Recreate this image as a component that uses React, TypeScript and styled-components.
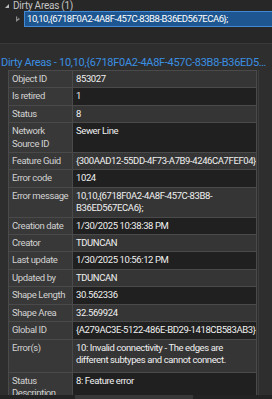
import React from "react";
import styled, { createGlobalStyle } from "styled-components";

const GlobalStyle = createGlobalStyle`
  html, body {
    margin: 0;
    padding: 0;
    background: #2b2b2b;
    overflow: hidden;
  }
  body {
    font-family: "Roboto", "Liberation Sans", sans-serif;
    font-size: 9.5px;
    letter-spacing: -0.4px;
  }
`;

const Page = styled.div`
  width: 272px;
  height: 399px;
  display: flex;
  flex-direction: column;
  overflow: hidden;
`;

const TreePanel = styled.div`
  flex: 0 0 43px;
  background: #272727;
  display: flex;
  flex-direction: column;
`;

const TreeRow = styled.div<{ $indent: number }>`
  flex: none;
  display: flex;
  align-items: center;
  padding-left: ${(p) => p.$indent}px;
  gap: 3px;
  color: #c4c4c4;
  font-size: 10px;
  letter-spacing: -0.25px;
  line-height: 11px;
  height: ${(p) => (p.$indent > 10 ? 15 : 11)}px;
  white-space: nowrap;
`;

const Arrow = styled.span`
  display: inline-block;
  width: 0;
  height: 0;
  border-left: 4px solid transparent;
  border-bottom: 4px solid #bcbcbc;
  margin-right: 1px;
`;

const HollowArrow = styled.span`
  position: relative;
  width: 4px;
  height: 6px;
  margin-right: 1px;
  &::before {
    content: "";
    position: absolute;
    left: 0;
    top: 0;
    border-top: 3px solid transparent;
    border-bottom: 3px solid transparent;
    border-left: 4px solid #8a8a8a;
  }
  &::after {
    content: "";
    position: absolute;
    left: 1px;
    top: 1.5px;
    border-top: 1.5px solid transparent;
    border-bottom: 1.5px solid transparent;
    border-left: 2px solid #272727;
  }
`;

const Selected = styled.span`
  flex: 1;
  height: 14px;
  line-height: 14px;
  background: #1d5690;
  border: 1px solid #4189d4;
  border-right: none;
  color: #ffffff;
  padding-left: 2px;
  font-size: 9.5px;
  letter-spacing: -0.45px;
`;

const DetailPanel = styled.div`
  flex: 1 1 auto;
  min-height: 0;
  background: #2e2e2e;
  border-top: 1px solid #3a3a3a;
  display: flex;
  flex-direction: column;
`;

const Title = styled.div`
  flex: 0 0 26px;
  box-sizing: border-box;
  padding: 12px 0 0 1px;
  line-height: 14px;
  font-size: 11px;
  letter-spacing: -0.3px;
  color: #3a8fe2;
  white-space: nowrap;
  overflow: hidden;
  text-overflow: ellipsis;
`;

const Body = styled.div`
  flex: 1 1 auto;
  min-height: 0;
  display: flex;
  padding-left: 8px;
  overflow: hidden;
`;

const Gutter = styled.div`
  flex: 1;
  border-left: 1px solid #3e3e3e;
  margin-left: 1px;
`;

const Table = styled.table`
  flex: none;
  width: 249px;
  border-collapse: collapse;
  table-layout: fixed;
  align-self: flex-start;
`;

const Cell = styled.td<{ $label?: boolean; $dark?: boolean }>`
  border: 1px solid #4a4a4a;
  padding: 2px 3px;
  line-height: 12.4px;
  vertical-align: top;
  white-space: pre;
  overflow: hidden;
  color: ${(p) => (p.$label ? "#d2d2d2" : "#f0f0f0")};
  background: ${(p) => (p.$label ? "#383838" : p.$dark ? "#202020" : "#353535")};
  width: ${(p) => (p.$label ? "57px" : "auto")};
`;

const Footer = styled.div`
  flex: 0 0 4px;
  display: flex;
  background: #232323;
`;

const FooterSegment = styled.div<{ $w: number; $light?: boolean }>`
  width: ${(p) => p.$w}px;
  background: ${(p) => (p.$light ? "#383838" : "transparent")};
`;

const rows: { label: string; value: string; tall?: number }[] = [
  { label: "Object ID", value: "853027" },
  { label: "Is retired", value: "1" },
  { label: "Status", value: "8" },
  { label: "Network\nSource ID", value: "Sewer Line" },
  { label: "Feature Guid", value: "{300AAD12-55DD-4F73-A7B9-4246CA7FEF04}" },
  { label: "Error code", value: "1024" },
  { label: "Error message", value: "10,10,{6718F0A2-4A8F-457C-83B8-\nB36ED567ECA6};" },
  { label: "Creation date", value: "1/30/2025 10:38:38 PM" },
  { label: "Creator", value: "TDUNCAN" },
  { label: "Last update", value: "1/30/2025 10:56:12 PM" },
  { label: "Updated by", value: "TDUNCAN" },
  { label: "Shape Length", value: "30.562336" },
  { label: "Shape Area", value: "32.569924" },
  { label: "Global ID", value: "{A279AC3E-5122-486E-BD29-1418CB583AB3}" },
  {
    label: "Error(s)",
    value: "10: Invalid connectivity - The edges are\ndifferent subtypes and cannot connect.",
    tall: 33,
  },
  { label: "Status\nDescription", value: "8: Feature error", tall: 28 },
];

export default function App() {
  return (
    <Page>
      <GlobalStyle />
      <TreePanel>
        <TreeRow $indent={5}>
          <Arrow />
          <span>Dirty Areas (1)</span>
        </TreeRow>
        <TreeRow $indent={16}>
          <HollowArrow />
          <Selected>10,10,{"{"}6718F0A2-4A8F-457C-83B8-B36ED567ECA6{"}"};</Selected>
        </TreeRow>
      </TreePanel>
      <DetailPanel>
        <Title>Dirty Areas - 10,10,{"{"}6718F0A2-4A8F-457C-83B8-B36ED567ECA6{"}"};</Title>
        <Body>
          <Table>
            <tbody>
              {rows.map((r, i) => (
                <tr key={r.label} style={r.tall ? { height: r.tall } : undefined}>
                  <Cell $label>{r.label}</Cell>
                  <Cell $dark={i % 2 === 1}>{r.value}</Cell>
                </tr>
              ))}
            </tbody>
          </Table>
          <Gutter />
        </Body>
        <Footer>
          <FooterSegment $w={75} />
          <FooterSegment $w={118} $light />
        </Footer>
      </DetailPanel>
    </Page>
  );
}
